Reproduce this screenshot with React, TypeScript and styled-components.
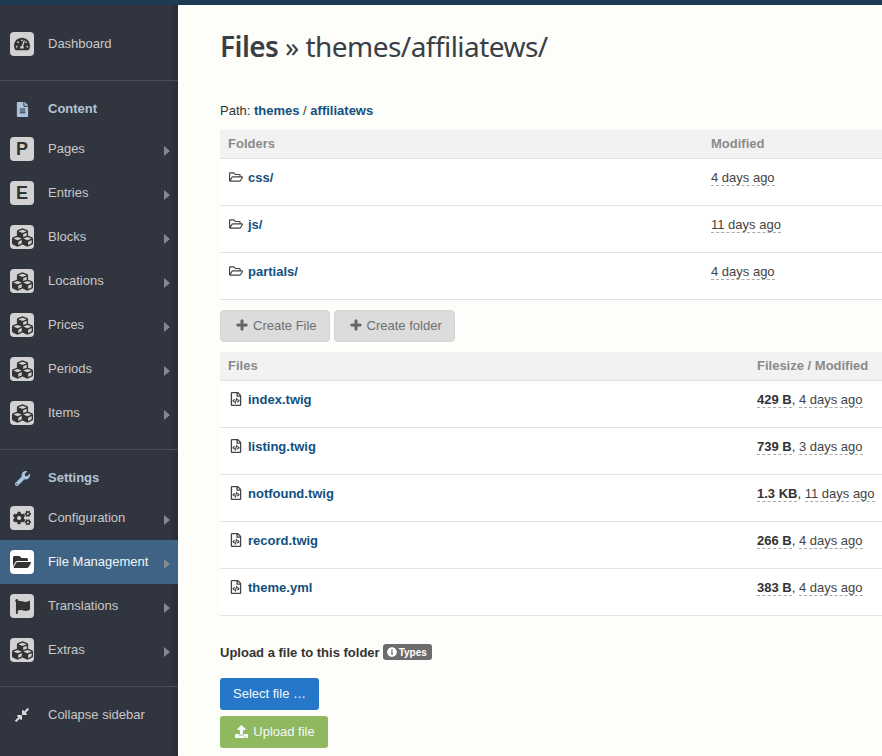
import React, { FC, ReactNode } from 'react';
import styled, { createGlobalStyle } from 'styled-components';
import {
    FaTachometerAlt, FaFileAlt, FaWrench, FaCubes, FaCogs, FaFolderOpen, FaFlag, FaCompressAlt,
    FaRegFolderOpen, FaRegFileCode, FaPlus, FaUpload, FaInfoCircle,
} from 'react-icons/fa';

const GlobalStyle = createGlobalStyle`
    html, body {
        margin: 0;
        height: 756px;
        overflow: hidden;
        background: #fdfdf9;
        font-family: "Liberation Sans", Arial, sans-serif;
        font-size: 13px;
        color: #333;
    }
`

const Page = styled.div`
    display: flex;
    flex-direction: column;
    height: 756px;
    overflow: hidden;
`

const TopBar = styled.div`
    height: 5px;
    flex: none;
    background: #1d3b53;
`

const Body = styled.div`
    display: flex;
    flex: 1;
    min-height: 0;
`

const Sidebar = styled.nav`
    width: 178px;
    flex: none;
    background: #31353f;
    box-shadow: inset -6px 0 4px -2px rgba(0, 0, 0, 0.16);
`

const Group = styled.div<{ $top: number }>`
    padding: ${props => props.$top}px 0 14px;
    border-bottom: 1px solid #494d56;
    &:last-child {
        border-bottom: 0;
    }
`

const Row = styled.div<{ $active?: boolean }>`
    position: relative;
    display: flex;
    align-items: center;
    height: 44px;
    padding-left: 10px;
    color: ${props => props.$active ? '#f0f4f7' : '#c8c8c8'};
    background: ${props => props.$active ? '#3e6384' : 'transparent'};
`

const Tile = styled.span<{ $active?: boolean }>`
    display: flex;
    align-items: center;
    justify-content: center;
    width: 24px;
    height: 24px;
    flex: none;
    border-radius: 4px;
    background: ${props => props.$active ? '#fff' : '#d2d2d2'};
    color: #333;
    font-size: 18px;
    font-weight: bold;
`

const RowLabel = styled.span`
    margin-left: 14px;
    padding-bottom: 2px;
`

const Caret = styled.i`
    position: absolute;
    left: 164px;
    top: 19px;
    width: 0;
    height: 0;
    border-style: solid;
    border-width: 5px 0 5px 6px;
    border-color: transparent transparent transparent #85888e;
`

const PlainRow = styled.div<{ $strong?: boolean }>`
    display: flex;
    align-items: center;
    height: 36px;
    padding-left: 10px;
    color: ${props => props.$strong ? '#b4c4d4' : '#c8c8c8'};
    font-weight: ${props => props.$strong ? 'bold' : 'normal'};
`

const PlainIcon = styled.span`
    display: flex;
    align-items: center;
    justify-content: center;
    width: 24px;
    height: 24px;
    flex: none;
    font-size: 15px;
`

const Main = styled.main`
    flex: 1;
    min-width: 0;
    padding: 0 0 0 42px;
    overflow: hidden;
`

const Title = styled.h1`
    margin: 21px 0 0;
    height: 40px;
    font-family: "Noto Sans", sans-serif;
    font-size: 28px;
    line-height: 40px;
    font-weight: 400;
    letter-spacing: -0.55px;
    color: #3a3f45;
    white-space: nowrap;
    b {
        font-weight: 600;
    }
`

const PathLine = styled.p`
    margin: 34px 0 0;
    height: 20px;
    line-height: 22px;
`

const Link = styled.a`
    color: #12507f;
    font-weight: bold;
    text-decoration: none;
`

const Table = styled.table`
    width: 662px;
    table-layout: fixed;
    border-collapse: collapse;
    margin-top: 10px;
`

const Th = styled.th`
    height: 26px;
    padding: 0 8px 2px;
    background: #f2f2f2;
    border-bottom: 1px solid #e2e2e2;
    color: #8a8a8a;
    font-weight: bold;
    text-align: left;
`

const Td = styled.td`
    height: 36px;
    padding: 0 8px 10px;
    background: #fff;
    border-bottom: 1px solid #e4e4e4;
    white-space: nowrap;
`

const NameCell = styled.span`
    display: flex;
    align-items: center;
    gap: 5px;
    height: 15px;
    padding-left: 1px;
    svg {
        width: 14px;
        height: 14px;
        color: #444;
    }
`

const Dated = styled.span`
    border-bottom: 1px dashed #aaa;
    color: #444;
`

const Size = styled(Dated)`
    color: #333;
    font-weight: bold;
`

const Buttons = styled.div`
    display: flex;
    gap: 4px;
    margin-top: 10px;
`

const GreyButton = styled.button`
    display: flex;
    align-items: center;
    gap: 5px;
    height: 32px;
    padding: 0 12px 2px 15px;
    border: 1px solid #d4d4d4;
    border-radius: 4px;
    background: #dcdcdc;
    color: #6f6f6f;
    font: 13px "Liberation Sans", Arial, sans-serif;
    svg {
        width: 12px;
        height: 12px;
        color: #666;
        stroke: currentColor;
        stroke-width: 30;
    }
`

const UploadTitle = styled.div`
    display: flex;
    align-items: center;
    gap: 3px;
    margin-top: 26px;
    height: 20px;
    font-weight: bold;
`

const Badge = styled.span`
    display: inline-flex;
    align-items: center;
    gap: 2px;
    height: 16px;
    padding: 0 5px 0 4px;
    border-radius: 3px;
    background: #6c6c6c;
    color: #fff;
    font-size: 10px;
    font-weight: bold;
    svg {
        width: 10px;
        height: 10px;
    }
`

const ActionButton = styled.button<{ $color: string; $width: number; $shift?: number }>`
    display: flex;
    align-items: center;
    justify-content: center;
    gap: 5px;
    width: ${props => props.$width}px;
    height: 32px;
    padding: 0 0 2px ${props => props.$shift ?? 0}px;
    border: 0;
    border-radius: 3px;
    background: ${props => props.$color};
    color: #f4f8fb;
    font: 13px "Liberation Sans", Arial, sans-serif;
    svg {
        width: 13px;
        height: 13px;
    }
`

const UploadStack = styled.div`
    display: flex;
    flex-direction: column;
    gap: 6px;
    margin-top: 16px;
`

const NavItem: FC<{ icon: ReactNode; label: string; active?: boolean; caret?: boolean }> = ({ icon, label, active, caret = true }) => (
    <Row $active={active}>
        <Tile $active={active}>{icon}</Tile>
        <RowLabel>{label}</RowLabel>
        {caret && <Caret />}
    </Row>
)

const cubes = <FaCubes size={21} />

const folders = [
    { name: 'css/', modified: '4 days ago' },
    { name: 'js/', modified: '11 days ago' },
    { name: 'partials/', modified: '4 days ago' },
]

const files = [
    { name: 'index.twig', size: '429 B', modified: '4 days ago' },
    { name: 'listing.twig', size: '739 B', modified: '3 days ago' },
    { name: 'notfound.twig', size: '1.3 KB', modified: '11 days ago' },
    { name: 'record.twig', size: '266 B', modified: '4 days ago' },
    { name: 'theme.yml', size: '383 B', modified: '4 days ago' },
]

const App: FC = () => (
    <Page>
        <GlobalStyle />
        <TopBar />
        <Body>
            <Sidebar>
                <Group $top={17}>
                    <NavItem icon={<FaTachometerAlt size={16} />} label="Dashboard" caret={false} />
                </Group>
                <Group $top={10}>
                    <PlainRow $strong>
                        <PlainIcon><FaFileAlt color="#a9c4dc" /></PlainIcon>
                        <RowLabel>Content</RowLabel>
                    </PlainRow>
                    <NavItem icon="P" label="Pages" />
                    <NavItem icon="E" label="Entries" />
                    <NavItem icon={cubes} label="Blocks" />
                    <NavItem icon={cubes} label="Locations" />
                    <NavItem icon={cubes} label="Prices" />
                    <NavItem icon={cubes} label="Periods" />
                    <NavItem icon={cubes} label="Items" />
                </Group>
                <Group $top={10}>
                    <PlainRow $strong>
                        <PlainIcon><FaWrench color="#a9c4dc" /></PlainIcon>
                        <RowLabel>Settings</RowLabel>
                    </PlainRow>
                    <NavItem icon={<FaCogs size={18} />} label="Configuration" />
                    <NavItem icon={<FaFolderOpen size={18} />} label="File Management" active />
                    <NavItem icon={<FaFlag size={15} />} label="Translations" />
                    <NavItem icon={cubes} label="Extras" />
                </Group>
                <Group $top={10}>
                    <PlainRow>
                        <PlainIcon><FaCompressAlt size={16} color="#d8d8d8" /></PlainIcon>
                        <RowLabel>Collapse sidebar</RowLabel>
                    </PlainRow>
                </Group>
            </Sidebar>
            <Main>
                <Title><b>Files</b> » themes/affiliatews/</Title>
                <PathLine>Path: <Link>themes</Link> / <Link>affiliatews</Link></PathLine>
                <Table>
                    <colgroup><col width="483" /><col /></colgroup>
                    <thead>
                        <tr><Th>Folders</Th><Th>Modified</Th></tr>
                    </thead>
                    <tbody>
                        {folders.map(folder => (
                            <tr key={folder.name}>
                                <Td><NameCell><FaRegFolderOpen /><Link>{folder.name}</Link></NameCell></Td>
                                <Td><Dated>{folder.modified}</Dated></Td>
                            </tr>
                        ))}
                    </tbody>
                </Table>
                <Buttons>
                    <GreyButton><FaPlus />Create File</GreyButton>
                    <GreyButton><FaPlus />Create folder</GreyButton>
                </Buttons>
                <Table>
                    <colgroup><col width="529" /><col /></colgroup>
                    <thead>
                        <tr><Th>Files</Th><Th>Filesize / Modified</Th></tr>
                    </thead>
                    <tbody>
                        {files.map(file => (
                            <tr key={file.name}>
                                <Td><NameCell><FaRegFileCode /><Link>{file.name}</Link></NameCell></Td>
                                <Td><Size>{file.size}</Size>, <Dated>{file.modified}</Dated></Td>
                            </tr>
                        ))}
                    </tbody>
                </Table>
                <UploadTitle>Upload a file to this folder <Badge><FaInfoCircle />Types</Badge></UploadTitle>
                <UploadStack>
                    <ActionButton $color="#2677c9" $width={99}>Select file …</ActionButton>
                    <ActionButton $color="#8fb85f" $width={108} $shift={2}><FaUpload />Upload file</ActionButton>
                </UploadStack>
            </Main>
        </Body>
    </Page>
)

export default App
